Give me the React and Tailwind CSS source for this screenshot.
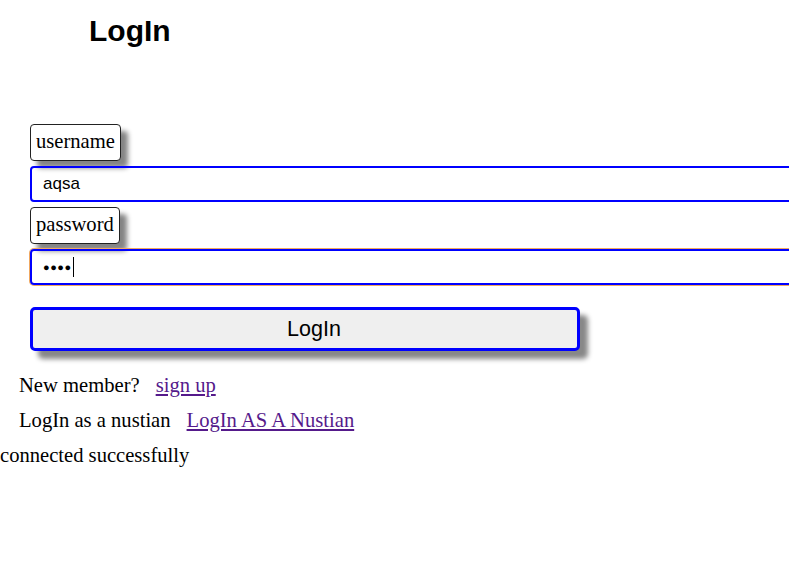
import React from 'react';

const serif = { fontFamily: '"Liberation Serif", "Times New Roman", serif' };
const sans = { fontFamily: '"Liberation Sans", Arial, sans-serif' };

function FieldLabel({ children }) {
  return (
    <div className="flex">
      <div
        className="h-[37px] border border-[#222] rounded-[4px] bg-white px-[5px] pt-[5px] text-[20.6px] leading-[23px] text-black shadow-[7px_7px_5px_#858585]"
        style={serif}
      >
        {children}
      </div>
    </div>
  );
}

export default function App() {
  return (
    <div className="relative w-[789px] h-[569px] overflow-hidden bg-white text-black">
      {/* Header */}
      <h1 className="pl-[89px] pt-[16px] text-[30px] leading-[30px] font-bold" style={sans}>
        LogIn
      </h1>

      {/* Form */}
      <div className="ml-[30px] mt-[78px] flex flex-col gap-[5px]">
        <FieldLabel>username</FieldLabel>
        <input
          readOnly
          value="aqsa"
          className="w-[770px] h-[36px] border-2 border-[#0000ff] rounded-[4px] pl-[11px] text-[17px] text-black outline-none"
          style={sans}
        />
        <FieldLabel>password</FieldLabel>
        <div className="w-[770px] h-[36px] border-2 border-[#0000ff] rounded-[4px] pl-[11px] flex items-center ring-1 ring-[#f0a860]">
          <span className="text-[11px] tracking-[0.5px] leading-none" style={sans}>●●●●</span>
          <span className="ml-[1px] w-[1px] h-[20px] bg-black" />
        </div>
        <button
          className="mt-[17px] w-[550px] h-[44px] border-[3px] border-[#0000ff] rounded-[5px] bg-[#efefef] pl-[18px] text-[21.5px] text-black shadow-[8px_8px_5px_#888]"
          style={sans}
        >
          LogIn
        </button>
      </div>

      {/* Links */}
      <div className="mt-[17px] text-[20.6px]" style={serif}>
        <div className="h-[35px] leading-[35px] pl-[19px] flex gap-[16px]">
          <span>New member?</span>
          <a href="#" className="text-[#551a8b] underline">sign up</a>
        </div>
        <div className="h-[35px] leading-[35px] pl-[19px] flex gap-[16px]">
          <span>LogIn as a nustian</span>
          <a href="#" className="text-[#551a8b] underline">LogIn AS A Nustian</a>
        </div>
        <div className="h-[35px] leading-[35px]">connected successfully</div>
      </div>
    </div>
  );
}
